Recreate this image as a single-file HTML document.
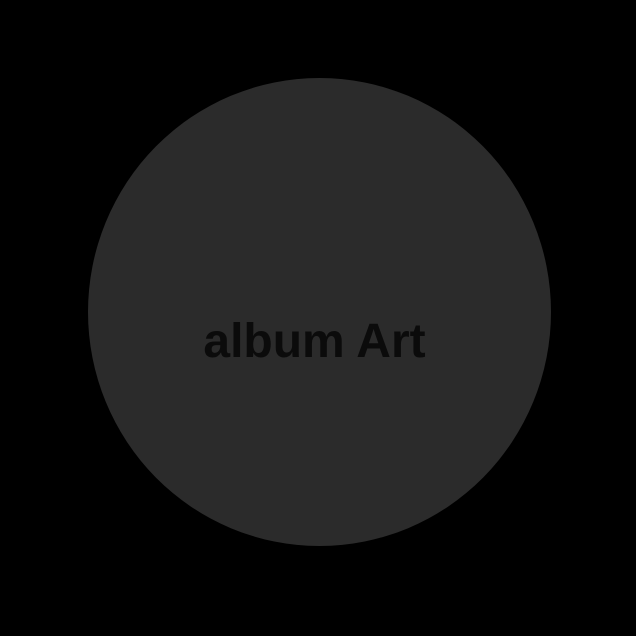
<!DOCTYPE html>
<html><head><style>
html,body{margin:0;padding:0;background:#000;width:636px;height:636px;overflow:hidden}
.c{position:absolute;left:88px;top:78px;width:463px;height:468px;border-radius:50%;background:#2b2b2b}
.t{position:absolute;left:0;width:636px;top:316px;text-align:center;font:bold 48px "Liberation Sans",sans-serif;color:#0b0b0b;line-height:52px;padding-right:7px;box-sizing:border-box}
</style></head><body>
<div class="c"></div>
<div class="t">album Art</div>
</body></html>
